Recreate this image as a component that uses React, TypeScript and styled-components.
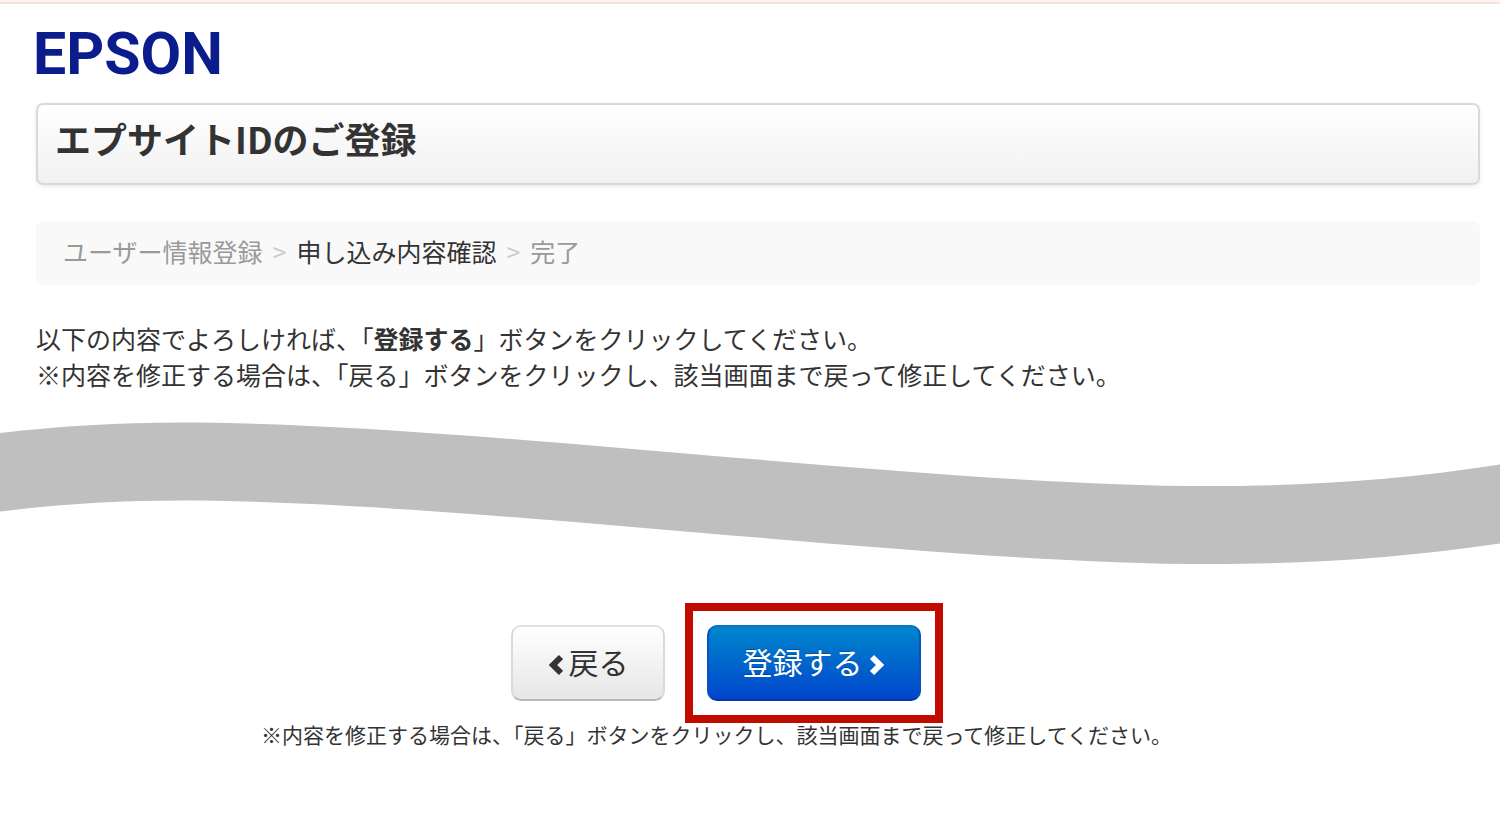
import React from 'react';
import styled, { createGlobalStyle, css } from 'styled-components';

const GlobalStyle = createGlobalStyle`
  *, *::before, *::after { box-sizing: border-box; }
  body {
    margin: 0;
    background: #fff;
    color: #333;
    font-family: "Noto Sans CJK JP", "Noto Sans", sans-serif;
    font-size: 25px;
    line-height: 36px;
  }
`;

const Page = styled.div`
  padding-bottom: 64px;
`;

const TopLine = styled.div`
  height: 4px;
  border-bottom: 2px solid #f8dfdc;
  background: #fdf3f1;
`;

const Content = styled.main`
  padding: 20px 20px 0 36px;
`;

const Logo = styled.a`
  display: block;
  width: max-content;
  margin-left: -3px;
  color: #0b1c8c;
  font: 700 59px/60px Roboto, "Liberation Sans", sans-serif;
  text-decoration: none;
`;

const TitleBar = styled.header`
  margin-top: 19px;
  padding: 14px 20px 26px 17px;
  border: 2px solid #d9d9d9;
  border-radius: 7px;
  background: linear-gradient(#fff, #f1f1f1);
  box-shadow: 0 2px 5px rgba(0, 0, 0, 0.08);
`;

const Title = styled.h1`
  margin: 0;
  font-size: 36px;
  line-height: 38px;
`;

const Steps = styled.ol`
  display: flex;
  margin: 36px 0 0;
  padding: 12px 27px 16px;
  border-radius: 7px;
  background: #f9f9f9;
  list-style: none;
`;

const Step = styled.li<{ $current?: boolean }>`
  color: ${({ $current }) => ($current ? '#333' : '#999')};

  &:not(:first-child)::before {
    content: ">";
    margin: 0 10px;
    color: #ccc;
  }
`;

const Lead = styled.p`
  margin: 35px 0 0;
`;

const Wave = styled.svg`
  display: block;
  width: 100%;
  height: 144px;
  margin-top: 29px;
`;

const Actions = styled.section`
  display: flex;
  flex-direction: column;
  align-items: center;
  padding: 38px 67px 0 0;
`;

const ButtonRow = styled.div`
  display: flex;
  align-items: center;
  gap: 20px;
  margin-left: 20px;
`;

const Highlight = styled.div`
  padding: 14px;
  border: 8px solid #c20a00;
`;

const Button = styled.button<{ $primary?: boolean }>`
  display: flex;
  align-items: center;
  justify-content: center;
  gap: 6px;
  height: 76px;
  padding: 0 34px 4px;
  border: 2px solid;
  border-radius: 10px;
  font: inherit;
  font-size: 30px;
  cursor: pointer;

  ${({ $primary }) =>
    $primary
      ? css`
          color: #fff;
          border-color: #0a74bd #0a50c0 #0538a0;
          background: linear-gradient(#0088cc, #0044cc) border-box;
          text-shadow: 0 -1px 0 rgba(0, 0, 0, 0.25);
        `
      : css`
          color: #333;
          border-color: #e2e2e2 #dadada #b8b8b8;
          background: linear-gradient(#fff, #e6e6e6);
        `}
`;

const Chevron = styled.svg`
  width: 16px;
  height: 22px;
  margin-top: 8px;
  fill: none;
  stroke: currentColor;
  stroke-width: 6;
`;

const Note = styled.p`
  margin: 0;
  font-size: 21px;
  line-height: 22px;
`;

export default function App() {
  return (
    <>
      <GlobalStyle />
      <Page>
        <TopLine />
        <Content>
          <Logo href="#">EPSON</Logo>
          <TitleBar>
            <Title>エプサイトIDのご登録</Title>
          </TitleBar>
          <Steps>
            <Step>ユーザー情報登録</Step>
            <Step $current aria-current="step">申し込み内容確認</Step>
            <Step>完了</Step>
          </Steps>
          <Lead>
            以下の内容でよろしければ、「<strong>登録する</strong>」ボタンをクリックしてください。
            <br />
            ※内容を修正する場合は、「戻る」ボタンをクリックし、該当画面まで戻って修正してください。
          </Lead>
        </Content>
        <Wave viewBox="0 0 1500 144" preserveAspectRatio="none" aria-hidden="true">
          <path
            fill="#bfbfbf"
            d="M0 12C60 5 120 1.500 180 1.500C466 1.500 924 65 1210 65C1310 65 1400 59 1500 43.500V122.500C1400 137 1310 143 1210 143C924 143 466 79.500 180 79.500C120 79.500 60 83 0 90.500Z"
          />
        </Wave>
        <Actions>
          <ButtonRow>
            <Button type="button">
              <Chevron viewBox="0 0 16 22" aria-hidden="true">
                <path d="M14 3 6 11l8 8" />
              </Chevron>
              戻る
            </Button>
            <Highlight>
              <Button type="submit" $primary>
                登録する
                <Chevron viewBox="0 0 16 22" aria-hidden="true">
                  <path d="M3 3l8 8-8 8" />
                </Chevron>
              </Button>
            </Highlight>
          </ButtonRow>
          <Note>※内容を修正する場合は、「戻る」ボタンをクリックし、該当画面まで戻って修正してください。</Note>
        </Actions>
      </Page>
    </>
  );
}
